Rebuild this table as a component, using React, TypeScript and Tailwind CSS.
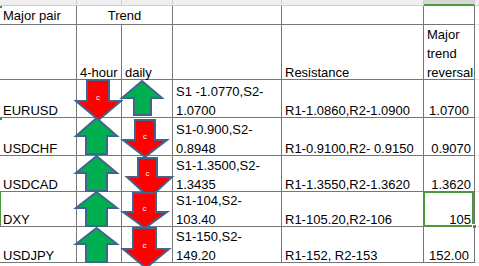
import React from 'react'

type Row = {
  pair: string
  support: [string, string]
  resistance: string
  reversal: string
  align: 'center' | 'right'
  selected?: boolean
}

const rows: Row[] = [
  { pair: 'EURUSD', support: ['S1 -1.0770,S2-', '1.0700'], resistance: 'R1-1.0860,R2-1.0900', reversal: '1.0700', align: 'center' },
  { pair: 'USDCHF', support: ['S1-0.900,S2-', '0.8948'], resistance: 'R1-0.9100,R2- 0.9150', reversal: '0.9070', align: 'right' },
  { pair: 'USDCAD', support: ['S1-1.3500,S2-', '1.3435'], resistance: 'R1-1.3550,R2-1.3620', reversal: '1.3620', align: 'right' },
  { pair: 'DXY', support: ['S1-104,S2-', '103.40'], resistance: 'R1-105.20,R2-106', reversal: '105', align: 'right', selected: true },
  { pair: 'USDJPY', support: ['S1-150,S2-', '149.20'], resistance: 'R1-152, R2-153', reversal: '152.00', align: 'center' },
]

// block arrows drawn over the sheet, in page pixels
const downArrows = [
  { l: 76, r: 121, s1: 87, s2: 109, top: 80, neck: 101, tip: 120 },
  { l: 123, r: 167, s1: 135, s2: 155, top: 120, neck: 140, tip: 157 },
  { l: 127, r: 172, s1: 138, s2: 157, top: 158, neck: 177, tip: 198 },
  { l: 123, r: 167, s1: 133, s2: 156, top: 193, neck: 212, tip: 228 },
  { l: 123, r: 169, s1: 133, s2: 156, top: 228, neck: 249, tip: 268 },
]

const upArrows = [
  { l: 122, r: 162, s1: 134, s2: 151, tip: 81, neck: 98, bottom: 115 },
  { l: 76, r: 117, s1: 86, s2: 107, tip: 118, neck: 136, bottom: 154 },
  { l: 76, r: 117, s1: 86, s2: 107, tip: 156, neck: 173, bottom: 191 },
  { l: 76, r: 117, s1: 86, s2: 107, tip: 192, neck: 208, bottom: 226 },
  { l: 76, r: 117, s1: 86, s2: 107, tip: 228, neck: 244, bottom: 262 },
]

const line = 'border-r border-b border-[#767676]'
const cell = `${line} relative flex items-end px-[3px] min-w-0`
const txt = 'leading-[19px] whitespace-nowrap translate-y-[2.5px]'

function Arrows() {
  return (
    <svg className="pointer-events-none absolute left-0 top-0" width={479} height={266}>
      {downArrows.map((a, i) => {
        const cx = (a.l + a.r) / 2
        const pts = `${a.s1},${a.top} ${a.s2},${a.top} ${a.s2},${a.neck} ${a.r},${a.neck} ${cx},${a.tip} ${a.l},${a.neck} ${a.s1},${a.neck}`
        const up = upArrows[i]
        const ucx = (up.l + up.r) / 2
        const upts = `${ucx},${up.tip} ${up.r},${up.neck} ${up.s2},${up.neck} ${up.s2},${up.bottom} ${up.s1},${up.bottom} ${up.s1},${up.neck} ${up.l},${up.neck}`
        return (
          <g key={i}>
            <polygon points={pts} fill="#ff0000" stroke="#41648f" strokeWidth={2} />
            <text
              x={(a.s1 + a.s2) / 2}
              y={a.neck - 1}
              fill="#ffffff"
              fontSize={8}
              textAnchor="middle"
              fontFamily="Liberation Sans, Arial, sans-serif"
            >
              c
            </text>
            <polygon points={upts} fill="#00b050" stroke="#41648f" strokeWidth={2} />
          </g>
        )
      })}
    </svg>
  )
}

export default function App() {
  return (
    <div className="relative h-[266px] w-[479px] overflow-hidden bg-white font-['Liberation_Sans',Arial,sans-serif] text-[13px] text-black">
      {/* column header strip */}
      <div className="grid h-[6px] grid-cols-[77px_45px_51px_109px_142px_51px_1fr] bg-[#efefef]">
        <div className="border-r border-b border-[#cfcfcf]" />
        <div className="border-r border-b border-[#cfcfcf]" />
        <div className="border-r border-b border-[#cfcfcf]" />
        <div className="border-r border-b border-[#cfcfcf]" />
        <div className="border-r border-b border-[#cfcfcf]" />
        <div className="border-r border-b-2 border-[#cfcfcf] border-b-[#4a9a3a] bg-[#d6d6d6]" />
        <div className="border-b border-[#cfcfcf]" />
      </div>

      <div className="grid grid-cols-[77px_45px_51px_109px_142px_51px_1fr] grid-rows-[19px_55px_38px_38px_36px_35px_36px]">
        {/* header row 1 */}
        <div className={cell}>
          <span className="absolute left-0 top-0 h-[2px] w-[2px] bg-[#3a9a3a]" />
          <span className="leading-[19px] whitespace-nowrap translate-y-[1px]">Major pair</span>
        </div>
        <div className={`${cell} col-span-2 justify-center`}>
          <span className="leading-[19px] whitespace-nowrap translate-y-[1px]">Trend</span>
        </div>
        <div className={cell} />
        <div className={cell} />
        <div className={cell} />
        <div className="border-b border-[#e2e2e2]" />

        {/* header row 2 */}
        <div className={cell} />
        <div className={`${cell} px-[2px]`}>
          <span className={txt}>4-hour</span>
        </div>
        <div className={`${cell} px-[2px]`}>
          <span className={txt}>daily</span>
        </div>
        <div className={cell} />
        <div className={cell}>
          <span className={txt}>Resistance</span>
        </div>
        <div className={cell}>
          <div className={`${txt} flex flex-col`}>
            <span>Major</span>
            <span>trend</span>
            <span>reversal</span>
          </div>
        </div>
        <div className="border-b border-[#e2e2e2]" />

        {rows.map((r, i) => (
          <React.Fragment key={r.pair}>
            <div className={cell}>
              {i === 1 && <span className="absolute left-0 top-0 h-[2px] w-[2px] bg-[#3a9a3a]" />}
              {r.selected && <span className="absolute left-0 top-0 h-full w-px bg-[#4a9a3a]" />}
              <span className={txt}>{r.pair}</span>
            </div>
            <div className={cell} />
            <div className={cell} />
            <div className={cell}>
              <div className={`${txt} flex flex-col`}>
                <span>{r.support[0]}</span>
                <span>{r.support[1]}</span>
              </div>
            </div>
            <div className={cell}>
              <span className={txt}>{r.resistance}</span>
            </div>
            <div className={`${cell} ${r.align === 'center' ? 'justify-center' : 'justify-end'}`}>
              {r.selected && (
                <>
                  <span className="absolute -left-px -top-px h-[36px] w-[51px] border-2 border-[#4a9a3a]" />
                  <span className="absolute -bottom-[3px] -right-[3px] h-[5px] w-[5px] border border-white bg-[#4a9a3a]" />
                </>
              )}
              <span className={txt}>{r.reversal}</span>
            </div>
            <div className="border-b border-[#e2e2e2]" />
          </React.Fragment>
        ))}
      </div>

      <Arrows />
    </div>
  )
}
